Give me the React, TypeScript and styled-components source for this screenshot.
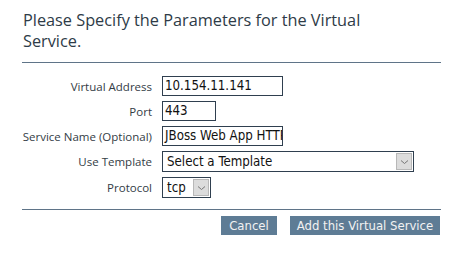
import React from "react";
import styled, { createGlobalStyle } from "styled-components";

const Global = createGlobalStyle`
  html, body { margin: 0; padding: 0; background: #ffffff; }
  body { font-family: "Open Sans", "Noto Sans", sans-serif; }
`;

const Page = styled.div`
  width: 456px;
  height: 253px;
  box-sizing: border-box;
  padding: 10px 15px 0 22px;
  overflow: hidden;
`;

const Title = styled.h2`
  margin: 0;
  font-family: "Open Sans", sans-serif;
  font-weight: 400;
  font-size: 16.3px;
  line-height: 21px;
  color: #2e3b47;
  padding-left: 1px;
`;

const Rule = styled.hr<{ $top?: number }>`
  margin: ${(p) => p.$top ?? 10}px 0 0 0;
  border: 0;
  border-top: 1px solid #5f7488;
  width: 419px;
`;

const Form = styled.div`
  display: grid;
  grid-template-columns: 130px auto;
  column-gap: 10px;
  row-gap: 5px;
  padding-top: 13px;
  align-items: center;
`;

const Label = styled.label`
  text-align: right;
  font-family: "Open Sans", sans-serif;
  font-size: 11.5px;
  color: #333c45;
  white-space: nowrap;
`;

const TextInput = styled.div<{ $w: number }>`
  box-sizing: border-box;
  width: ${(p) => p.$w}px;
  height: 20px;
  border: 1px solid #2f3f4f;
  background: #fff;
  font-family: "DejaVu Sans Condensed", "DejaVu Sans", sans-serif;
  font-size: 13.2px;
  line-height: 18px;
  padding-left: 2px;
  color: #111;
  white-space: nowrap;
  overflow: hidden;
`;

const Select = styled.div<{ $w: number }>`
  box-sizing: border-box;
  width: ${(p) => p.$w}px;
  height: 21px;
  border: 1px solid #2f3f4f;
  background: #fff;
  display: flex;
  align-items: stretch;
  font-family: "DejaVu Sans Condensed", "DejaVu Sans", sans-serif;
  font-size: 13.2px;
  color: #111;
`;

const SelectText = styled.span`
  flex: 1;
  padding-left: 4px;
  line-height: 19px;
  white-space: nowrap;
  overflow: hidden;
`;

const Arrow = styled.span`
  width: 16px;
  margin: 1px;
  background: #dcdcdc;
  border: 1px solid #b8b8b8;
  box-sizing: border-box;
  display: flex;
  align-items: center;
  justify-content: center;
`;

const Footer = styled.div`
  display: flex;
  justify-content: flex-end;
  gap: 13px;
  padding-top: 6px;
  width: 418px;
`;

const Button = styled.button<{ $w: number }>`
  width: ${(p) => p.$w}px;
  height: 19px;
  padding: 0;
  border: 0;
  background: #5e7c95;
  color: #f2f2f2;
  font-family: "DejaVu Sans Condensed", "DejaVu Sans", sans-serif;
  font-size: 13px;
  line-height: 19px;
  text-align: center;
  white-space: nowrap;
  cursor: pointer;
`;

const Chevron = () => (
  <svg width="9" height="6" viewBox="0 0 9 6">
    <path d="M1 1.5 L4.5 4.5 L8 1.5" fill="none" stroke="#777" strokeWidth="1" />
  </svg>
);

export default function App() {
  return (
    <>
      <Global />
      <Page>
        <Title>
          Please Specify the Parameters for the Virtual
          <br />
          Service.
        </Title>
        <Rule />
        <Form>
          <Label>Virtual Address</Label>
          <TextInput $w={121}>10.154.11.141</TextInput>
          <Label>Port</Label>
          <TextInput $w={54}>443</TextInput>
          <Label>Service Name (Optional)</Label>
          <TextInput $w={121}>JBoss Web App HTTPS</TextInput>
          <Label>Use Template</Label>
          <Select $w={252}>
            <SelectText>Select a Template</SelectText>
            <Arrow>
              <Chevron />
            </Arrow>
          </Select>
          <Label>Protocol</Label>
          <Select $w={49}>
            <SelectText>tcp</SelectText>
            <Arrow>
              <Chevron />
            </Arrow>
          </Select>
        </Form>
        <Rule $top={11} />
        <Footer>
          <Button $w={56}>Cancel</Button>
          <Button $w={150}>Add this Virtual Service</Button>
        </Footer>
      </Page>
    </>
  );
}
